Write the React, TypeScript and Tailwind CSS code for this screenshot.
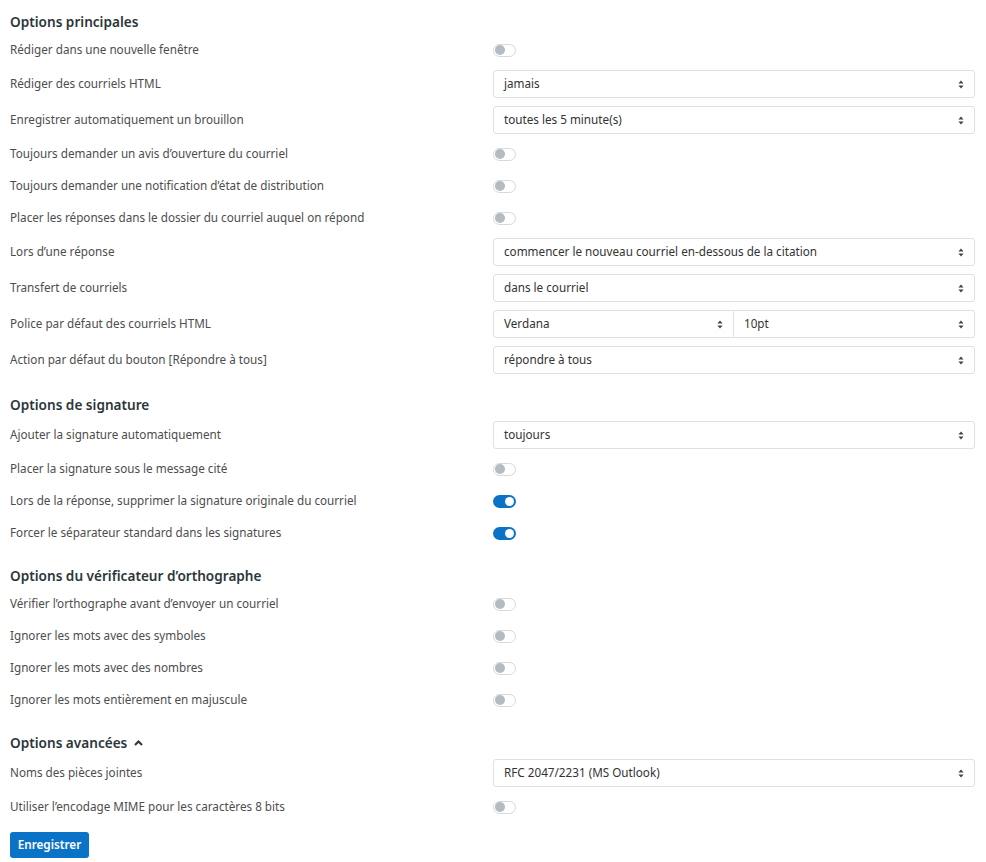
import React from "react";

type Row =
  | { kind: "toggle"; label: string; on?: boolean }
  | { kind: "select"; label: string; value: string }
  | { kind: "double"; label: string; a: string; b: string };

type Section = { title: string; chevron?: boolean; rows: Row[] };

const sections: Section[] = [
  {
    title: "Options principales",
    rows: [
      { kind: "toggle", label: "Rédiger dans une nouvelle fenêtre" },
      { kind: "select", label: "Rédiger des courriels HTML", value: "jamais" },
      { kind: "select", label: "Enregistrer automatiquement un brouillon", value: "toutes les 5 minute(s)" },
      { kind: "toggle", label: "Toujours demander un avis d’ouverture du courriel" },
      { kind: "toggle", label: "Toujours demander une notification d’état de distribution" },
      { kind: "toggle", label: "Placer les réponses dans le dossier du courriel auquel on répond" },
      { kind: "select", label: "Lors d’une réponse", value: "commencer le nouveau courriel en-dessous de la citation" },
      { kind: "select", label: "Transfert de courriels", value: "dans le courriel" },
      { kind: "double", label: "Police par défaut des courriels HTML", a: "Verdana", b: "10pt" },
      { kind: "select", label: "Action par défaut du bouton [Répondre à tous]", value: "répondre à tous" },
    ],
  },
  {
    title: "Options de signature",
    rows: [
      { kind: "select", label: "Ajouter la signature automatiquement", value: "toujours" },
      { kind: "toggle", label: "Placer la signature sous le message cité" },
      { kind: "toggle", label: "Lors de la réponse, supprimer la signature originale du courriel", on: true },
      { kind: "toggle", label: "Forcer le séparateur standard dans les signatures", on: true },
    ],
  },
  {
    title: "Options du vérificateur d’orthographe",
    rows: [
      { kind: "toggle", label: "Vérifier l’orthographe avant d’envoyer un courriel" },
      { kind: "toggle", label: "Ignorer les mots avec des symboles" },
      { kind: "toggle", label: "Ignorer les mots avec des nombres" },
      { kind: "toggle", label: "Ignorer les mots entièrement en majuscule" },
    ],
  },
  {
    title: "Options avancées",
    chevron: true,
    rows: [
      { kind: "select", label: "Noms des pièces jointes", value: "RFC 2047/2231 (MS Outlook)" },
      { kind: "toggle", label: "Utiliser l’encodage MIME pour les caractères 8 bits" },
    ],
  },
];

function SortArrows() {
  return (
    <svg width="6" height="9" viewBox="0 0 6 9" className="shrink-0">
      <path d="M3 0.5 L5.6 3.6 H0.4 Z" fill="#444" />
      <path d="M3 8.5 L5.6 5.4 H0.4 Z" fill="#444" />
    </svg>
  );
}

function Toggle({ on }: { on?: boolean }) {
  return on ? (
    <div className="w-[23px] h-[13px] rounded-full bg-[#0b73c7] flex items-center justify-end px-[2px]">
      <div className="w-[9px] h-[9px] rounded-full bg-white" />
    </div>
  ) : (
    <div className="w-[23px] h-[13px] rounded-full border border-[#d5d9dc] bg-white flex items-center px-[1px]">
      <div className="w-[10px] h-[10px] rounded-full bg-[#b4bbc1]" />
    </div>
  );
}

function SelectBox({ value, className }: { value: string; className?: string }) {
  return (
    <div
      className={
        "h-[28px] flex items-center justify-between pl-[10px] pr-[10px] border border-[#dde1e4] bg-white text-[11.7px] text-[#333] " +
        (className ?? "")
      }
    >
      <span>{value}</span>
      <SortArrows />
    </div>
  );
}

function Control({ row }: { row: Row }) {
  if (row.kind === "toggle") return <Toggle on={row.on} />;
  if (row.kind === "select") return <SelectBox value={row.value} className="w-full rounded-[3px]" />;
  return (
    <div className="flex w-full">
      <SelectBox value={row.a} className="w-[241px] rounded-l-[3px]" />
      <SelectBox value={row.b} className="flex-1 border-l-0 rounded-r-[3px]" />
    </div>
  );
}

export default function App() {
  return (
    <div
      className="min-h-screen bg-white pl-[10px] pr-[11px] pt-[10px]"
      style={{ fontFamily: '"Noto Sans", "Open Sans", sans-serif' }}
    >
      {sections.map((s, i) => (
        <div key={s.title} className={i === 0 ? "" : "mt-[15px]"}>
          <h2 className="h-[24px] flex items-center gap-[7px] text-[13.6px] font-semibold text-[#2c363a]">
            {s.title}
            {s.chevron && (
              <svg width="9" height="6" viewBox="0 0 9 6">
                <path d="M1 5 L4.5 1.5 L8 5" stroke="#2c363a" strokeWidth="2" fill="none" />
              </svg>
            )}
          </h2>
          {s.rows.map((r) => (
            <div key={r.label} className={"flex items-center " + (r.kind === "toggle" ? "h-[32px]" : "h-[36px]")}>
              <div className="w-[483px] shrink-0 text-[11.7px] text-[#4d4d4d]">{r.label}</div>
              <div className="flex-1 flex items-center">
                <Control row={r} />
              </div>
            </div>
          ))}
        </div>
      ))}
      <button className="mt-[9px] w-[79px] h-[26px] rounded-[3px] bg-[#0b73c7] text-white text-[11.7px] font-semibold">
        Enregistrer
      </button>
    </div>
  );
}
